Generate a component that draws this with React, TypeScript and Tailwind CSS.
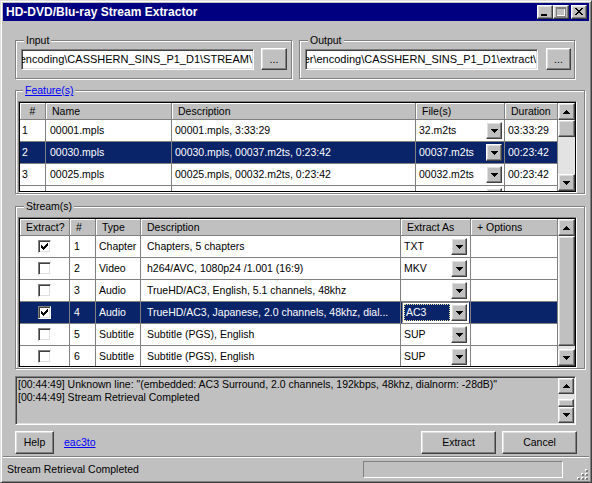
import React from "react";

const raised =
  "border border-t-white border-l-white border-r-[#404040] border-b-[#404040] shadow-[inset_-1px_-1px_0_#808080,inset_1px_1px_0_#dfdfdf]";
const sunken =
  "border border-t-[#808080] border-l-[#808080] border-r-white border-b-white shadow-[inset_1px_1px_0_#404040,inset_-1px_-1px_0_#dfdfdf]";

function DownArrow() {
  return (
    <svg width="7" height="4" viewBox="0 0 7 4" className="block">
      <path d="M0 0h7v1h-1v1h-1v1h-1v1h-1v-1h-1v-1h-1v-1h-1z" fill="#000" />
    </svg>
  );
}
function UpArrow() {
  return (
    <svg width="7" height="4" viewBox="0 0 7 4" className="block">
      <path d="M3 0h1v1h1v1h1v1h1v1h-7v-1h1v-1h1v-1h1z" fill="#000" />
    </svg>
  );
}

function DropBtn({ className = "" }: { className?: string }) {
  return (
    <div className={`${raised} bg-[#c0c0c0] w-[16px] h-[17px] flex items-center justify-center shrink-0 ${className}`}>
      <DownArrow />
    </div>
  );
}

function VScroll({ w, btn, pre, thumb }: { w: string; btn: string; pre: string; thumb: string }) {
  return (
    <div className={`${w} shrink-0 flex flex-col bg-[#e3e3e3]`}>
      <div className={`${btn} ${raised} bg-[#c0c0c0] flex items-center justify-center shrink-0`}>
        <UpArrow />
      </div>
      <div className={`${pre} shrink-0`} />
      <div className={`${thumb} ${raised} bg-[#c0c0c0] shrink-0`} />
      <div className="flex-1" />
      <div className={`${btn} ${raised} bg-[#c0c0c0] flex items-center justify-center shrink-0`}>
        <DownArrow />
      </div>
    </div>
  );
}

function Group({
  label,
  className,
  labelClass = "",
  children,
}: {
  label: React.ReactNode;
  className: string;
  labelClass?: string;
  children?: React.ReactNode;
}) {
  return (
    <div className={`relative border border-[#808080] shadow-[inset_1px_1px_0_#fff,1px_1px_0_#fff] shrink-0 ${className}`}>
      <span className={`absolute -top-[7px] px-[2px] bg-[#c0c0c0] leading-[13px] ${labelClass}`}>{label}</span>
      {children}
    </div>
  );
}

function HCell({ w, center, children }: { w: string; center?: boolean; children?: React.ReactNode }) {
  return (
    <div
      className={`${w} h-full shrink-0 border-r border-b border-[#808080] shadow-[inset_1px_1px_0_#fff] flex items-center whitespace-nowrap overflow-hidden ${
        center ? "justify-center" : "pl-[6px]"
      }`}
    >
      {children}
    </div>
  );
}

function Cell({ w, pl = "pl-[3px]", children }: { w: string; pl?: string; children?: React.ReactNode }) {
  return (
    <div className={`${w} h-full shrink-0 border-r border-b border-[#808080] flex items-center whitespace-nowrap overflow-hidden ${pl}`}>
      {children}
    </div>
  );
}

function CheckBox({ checked }: { checked: boolean }) {
  return (
    <div className={`w-[13px] h-[13px] bg-white ${sunken} flex items-center justify-center`}>
      {checked && (
        <svg width="7" height="7" viewBox="0 0 7 7" className="block">
          <rect x="0" y="2" width="1" height="3" fill="#000" />
          <rect x="1" y="3" width="1" height="3" fill="#000" />
          <rect x="2" y="4" width="1" height="3" fill="#000" />
          <rect x="3" y="3" width="1" height="3" fill="#000" />
          <rect x="4" y="2" width="1" height="3" fill="#000" />
          <rect x="5" y="1" width="1" height="3" fill="#000" />
          <rect x="6" y="0" width="1" height="3" fill="#000" />
        </svg>
      )}
    </div>
  );
}

const feats: [string, string, string, string, string, boolean][] = [
  ["1", "00001.mpls", "00001.mpls, 3:33:29", "32.m2ts", "03:33:29", false],
  ["2", "00030.mpls", "00030.mpls, 00037.m2ts, 0:23:42", "00037.m2ts", "00:23:42", true],
  ["3", "00025.mpls", "00025.mpls, 00032.m2ts, 0:23:42", "00032.m2ts", "00:23:42", false],
  ["", "", "", "", "", false],
];

const streams: [boolean, string, string, string, string, boolean][] = [
  [true, "1", "Chapter", "Chapters, 5 chapters", "TXT", false],
  [false, "2", "Video", "h264/AVC, 1080p24 /1.001 (16:9)", "MKV", false],
  [false, "3", "Audio", "TrueHD/AC3, English, 5.1 channels, 48khz", "", false],
  [true, "4", "Audio", "TrueHD/AC3, Japanese, 2.0 channels, 48khz, dial...", "AC3", true],
  [false, "5", "Subtitle", "Subtitle (PGS), English", "SUP", false],
  [false, "6", "Subtitle", "Subtitle (PGS), English", "SUP", false],
];

function PathBox({ text, w }: { text: string; w: string }) {
  return (
    <div
      className={`${w} h-[21px] mt-[1px] bg-white ${sunken} flex items-center justify-end overflow-hidden whitespace-nowrap pr-[1px] shrink-0 text-[11px]`}
    >
      <span>{text}</span>
    </div>
  );
}

function PushBtn({ w, h, children, className = "" }: { w: string; h: string; children?: React.ReactNode; className?: string }) {
  return (
    <div className={`${w} ${h} ${raised} bg-[#c0c0c0] flex items-center justify-center shrink-0 ${className}`}>{children}</div>
  );
}

function CapBtn({ children, className = "" }: { children?: React.ReactNode; className?: string }) {
  return (
    <div className={`w-[16px] h-[14px] ${raised} bg-[#c0c0c0] shrink-0 ${className}`}>
      <svg width="14" height="12" viewBox="0 0 14 12" className="block">
        {children}
      </svg>
    </div>
  );
}

export default function App() {
  return (
    <div className="w-[592px] h-[483px] bg-[#c0c0c0] font-['Liberation_Sans',Arial,sans-serif] text-[10.5px] leading-[13px] text-black flex flex-col border border-t-[#dfdfdf] border-l-[#dfdfdf] border-r-[#404040] border-b-[#404040] shadow-[inset_1px_1px_0_#fff,inset_-1px_-1px_0_#808080] p-[2px] overflow-hidden">
      {/* Title bar */}
      <div className="h-[18px] shrink-0 bg-[#000080] flex items-center justify-between px-[2px]">
        <span className="text-white font-bold text-[12px] leading-[14px] pl-[1px]">HD-DVD/Blu-ray Stream Extractor</span>
        <div className="flex items-center">
          <CapBtn>
            <rect x="3" y="8" width="6" height="2" fill="#000" />
          </CapBtn>
          <CapBtn>
            <rect x="3" y="2" width="9" height="9" fill="#fff" />
            <rect x="2" y="1" width="9" height="9" fill="none" stroke="#808080" strokeWidth="1" transform="translate(0.5 0.5)" />
            <rect x="2" y="1" width="9" height="2" fill="#808080" />
            <rect x="3" y="3" width="7" height="6" fill="#c0c0c0" />
          </CapBtn>
          <CapBtn className="ml-[2px]">
            <rect x="3" y="2" width="2" height="1" fill="#000" />
            <rect x="9" y="2" width="2" height="1" fill="#000" />
            <rect x="4" y="3" width="2" height="1" fill="#000" />
            <rect x="8" y="3" width="2" height="1" fill="#000" />
            <rect x="5" y="4" width="4" height="1" fill="#000" />
            <rect x="6" y="5" width="2" height="1" fill="#000" />
            <rect x="5" y="6" width="4" height="1" fill="#000" />
            <rect x="4" y="7" width="2" height="1" fill="#000" />
            <rect x="8" y="7" width="2" height="1" fill="#000" />
            <rect x="3" y="8" width="2" height="1" fill="#000" />
            <rect x="9" y="8" width="2" height="1" fill="#000" />
          </CapBtn>
        </div>
      </div>

      {/* Content */}
      <div className="flex-1 flex flex-col pl-[12px]">
        <div className="flex mt-[19px] gap-[7px]">
          <Group label="Input" className="w-[277px] h-[39px]" labelClass="left-[8px]">
            <div className="flex items-start pt-[7px] pl-[5px] gap-[7px]">
              <PathBox w="w-[233px]" text="\encoding\CASSHERN_SINS_P1_D1\STREAM\" />
              <PushBtn w="w-[26px]" h="h-[22px]">...</PushBtn>
            </div>
          </Group>
          <Group label="Output" className="w-[276px] h-[39px]" labelClass="left-[8px]">
            <div className="flex items-start pt-[7px] pl-[5px] gap-[8px]">
              <PathBox w="w-[233px]" text="er\encoding\CASSHERN_SINS_P1_D1\extract\" />
              <PushBtn w="w-[25px]" h="h-[22px]">...</PushBtn>
            </div>
          </Group>
        </div>

        {/* Features */}
        <Group
          label="Feature(s)"
          className="w-[570px] h-[104px] mt-[11px]"
          labelClass="left-[7px] text-[#0000ff] underline"
        >
          <div className="pl-[2px] pt-[10px]">
            <div className="w-[559px] h-[92px] border border-t-[#808080] border-l-[#808080] border-r-white border-b-white">
              <div className="w-full h-full border border-black bg-white flex overflow-hidden">
                <div className="w-[538px] shrink-0 flex flex-col overflow-hidden">
                  <div className="flex h-[17px] shrink-0 bg-[#c0c0c0]">
                    <HCell w="w-[26px]" center>
                      #
                    </HCell>
                    <HCell w="w-[126px]">Name</HCell>
                    <HCell w="w-[244px]">Description</HCell>
                    <HCell w="w-[89px]">File(s)</HCell>
                    <HCell w="w-[53px]">Duration</HCell>
                  </div>
                  {feats.map((r, i) => (
                    <div key={i} className={`flex h-[22px] shrink-0 ${r[5] ? "bg-[#0a246a] text-white" : "bg-white"}`}>
                      <Cell w="w-[26px]" pl="pl-[2px]">{r[0]}</Cell>
                      <Cell w="w-[126px]" pl="pl-[4px]">{r[1]}</Cell>
                      <Cell w="w-[244px]">{r[2]}</Cell>
                      <Cell w="w-[89px]">
                        <span>{r[3]}</span>
                        <DropBtn className="ml-auto mr-[2px]" />
                      </Cell>
                      <Cell w="w-[53px]">{r[4]}</Cell>
                    </div>
                  ))}
                </div>
                <VScroll w="w-[17px]" btn="h-[17px]" pre="h-[0px]" thumb="h-[17px]" />
              </div>
            </div>
          </div>
        </Group>

        {/* Streams */}
        <Group label="Stream(s)" className="w-[570px] h-[163px] mt-[12px]" labelClass="left-[8px]">
          <div className="pl-[2px] pt-[10px]">
            <div className="w-[559px] h-[151px] border border-t-[#808080] border-l-[#808080] border-r-white border-b-white">
              <div className="w-full h-full border border-black bg-white flex overflow-hidden">
                <div className="w-[538px] shrink-0 flex flex-col overflow-hidden">
                  <div className="flex h-[17px] shrink-0 bg-[#c0c0c0]">
                    <HCell w="w-[50px]">Extract?</HCell>
                    <HCell w="w-[26px]">#</HCell>
                    <HCell w="w-[45px]">Type</HCell>
                    <HCell w="w-[260px]">Description</HCell>
                    <HCell w="w-[70px]">Extract As</HCell>
                    <HCell w="w-[87px]">+ Options</HCell>
                  </div>
                  {streams.map((r, i) => (
                    <div key={i} className={`flex h-[22px] shrink-0 ${r[5] ? "bg-[#0a246a] text-white" : "bg-white"}`}>
                      <Cell w="w-[50px]" pl="justify-center">
                        <CheckBox checked={r[0]} />
                      </Cell>
                      <Cell w="w-[26px]" pl="pl-[4px]">{r[1]}</Cell>
                      <Cell w="w-[45px]" pl="pl-[3px]">{r[2]}</Cell>
                      <Cell w="w-[260px]" pl="pl-[6px]">{r[3]}</Cell>
                      {r[5] ? (
                        <Cell w="w-[70px]" pl="pl-0">
                          <div className="ml-[1px] w-[67px] h-[21px] bg-white border border-t-[#808080] border-l-[#808080] border-r-white border-b-white p-[1px] flex items-stretch gap-[1px]">
                            <div className="flex-1 bg-[#0a246a] text-white border border-dotted border-[#e8e8a0] flex items-center pl-[1px]">
                              {r[4]}
                            </div>
                            <DropBtn />
                          </div>
                        </Cell>
                      ) : (
                        <Cell w="w-[70px]" pl="pl-[3px]">
                          <span>{r[4]}</span>
                          <DropBtn className="ml-auto mr-[3px]" />
                        </Cell>
                      )}
                      <Cell w="w-[87px]" />
                    </div>
                  ))}
                </div>
                <VScroll w="w-[17px]" btn="h-[17px]" pre="h-[0px]" thumb="h-[110px]" />
              </div>
            </div>
          </div>
        </Group>

        {/* Log */}
        <div className={`mt-[7px] w-[561px] h-[49px] shrink-0 bg-[#c0c0c0] ${sunken} p-[1px] flex`}>
          <div className="flex-1 pl-[1px] overflow-hidden whitespace-nowrap">
            <div>[00:44:49] Unknown line: "(embedded: AC3 Surround, 2.0 channels, 192kbps, 48khz, dialnorm: -28dB)"</div>
            <div>[00:44:49] Stream Retrieval Completed</div>
          </div>
          <VScroll w="w-[16px]" btn="h-[16px]" pre="h-[5px]" thumb="h-[8px]" />
        </div>

        {/* Buttons */}
        <div className="mt-[6px] w-[562px] flex items-center">
          <PushBtn w="w-[39px]" h="h-[23px]">Help</PushBtn>
          <span className="ml-[10px] text-[#0000ff] underline">eac3to</span>
          <div className="ml-auto flex gap-[6px]">
            <PushBtn w="w-[75px]" h="h-[23px]">Extract</PushBtn>
            <PushBtn w="w-[75px]" h="h-[23px]">Cancel</PushBtn>
          </div>
        </div>
      </div>

      {/* Status bar */}
      <div className="h-[24px] shrink-0 border-t border-[#808080] shadow-[inset_0_1px_0_#fff] flex items-center pl-[4px] pt-[1px]">
        <span>Stream Retrieval Completed</span>
        <div className="ml-auto w-[200px] h-[17px] border border-t-[#808080] border-l-[#808080] border-r-white border-b-white" />
        <div className="w-[26px] self-stretch flex items-end justify-end pr-[1px]">
          <svg width="12" height="12" viewBox="0 0 12 12" className="block">
            <rect x="9" y="1" width="2" height="2" fill="#fff" />
            <rect x="10" y="2" width="2" height="2" fill="#808080" />
            <rect x="5" y="5" width="2" height="2" fill="#fff" />
            <rect x="6" y="6" width="2" height="2" fill="#808080" />
            <rect x="9" y="5" width="2" height="2" fill="#fff" />
            <rect x="10" y="6" width="2" height="2" fill="#808080" />
            <rect x="1" y="9" width="2" height="2" fill="#fff" />
            <rect x="2" y="10" width="2" height="2" fill="#808080" />
            <rect x="5" y="9" width="2" height="2" fill="#fff" />
            <rect x="6" y="10" width="2" height="2" fill="#808080" />
            <rect x="9" y="9" width="2" height="2" fill="#fff" />
            <rect x="10" y="10" width="2" height="2" fill="#808080" />
          </svg>
        </div>
      </div>
    </div>
  );
}
